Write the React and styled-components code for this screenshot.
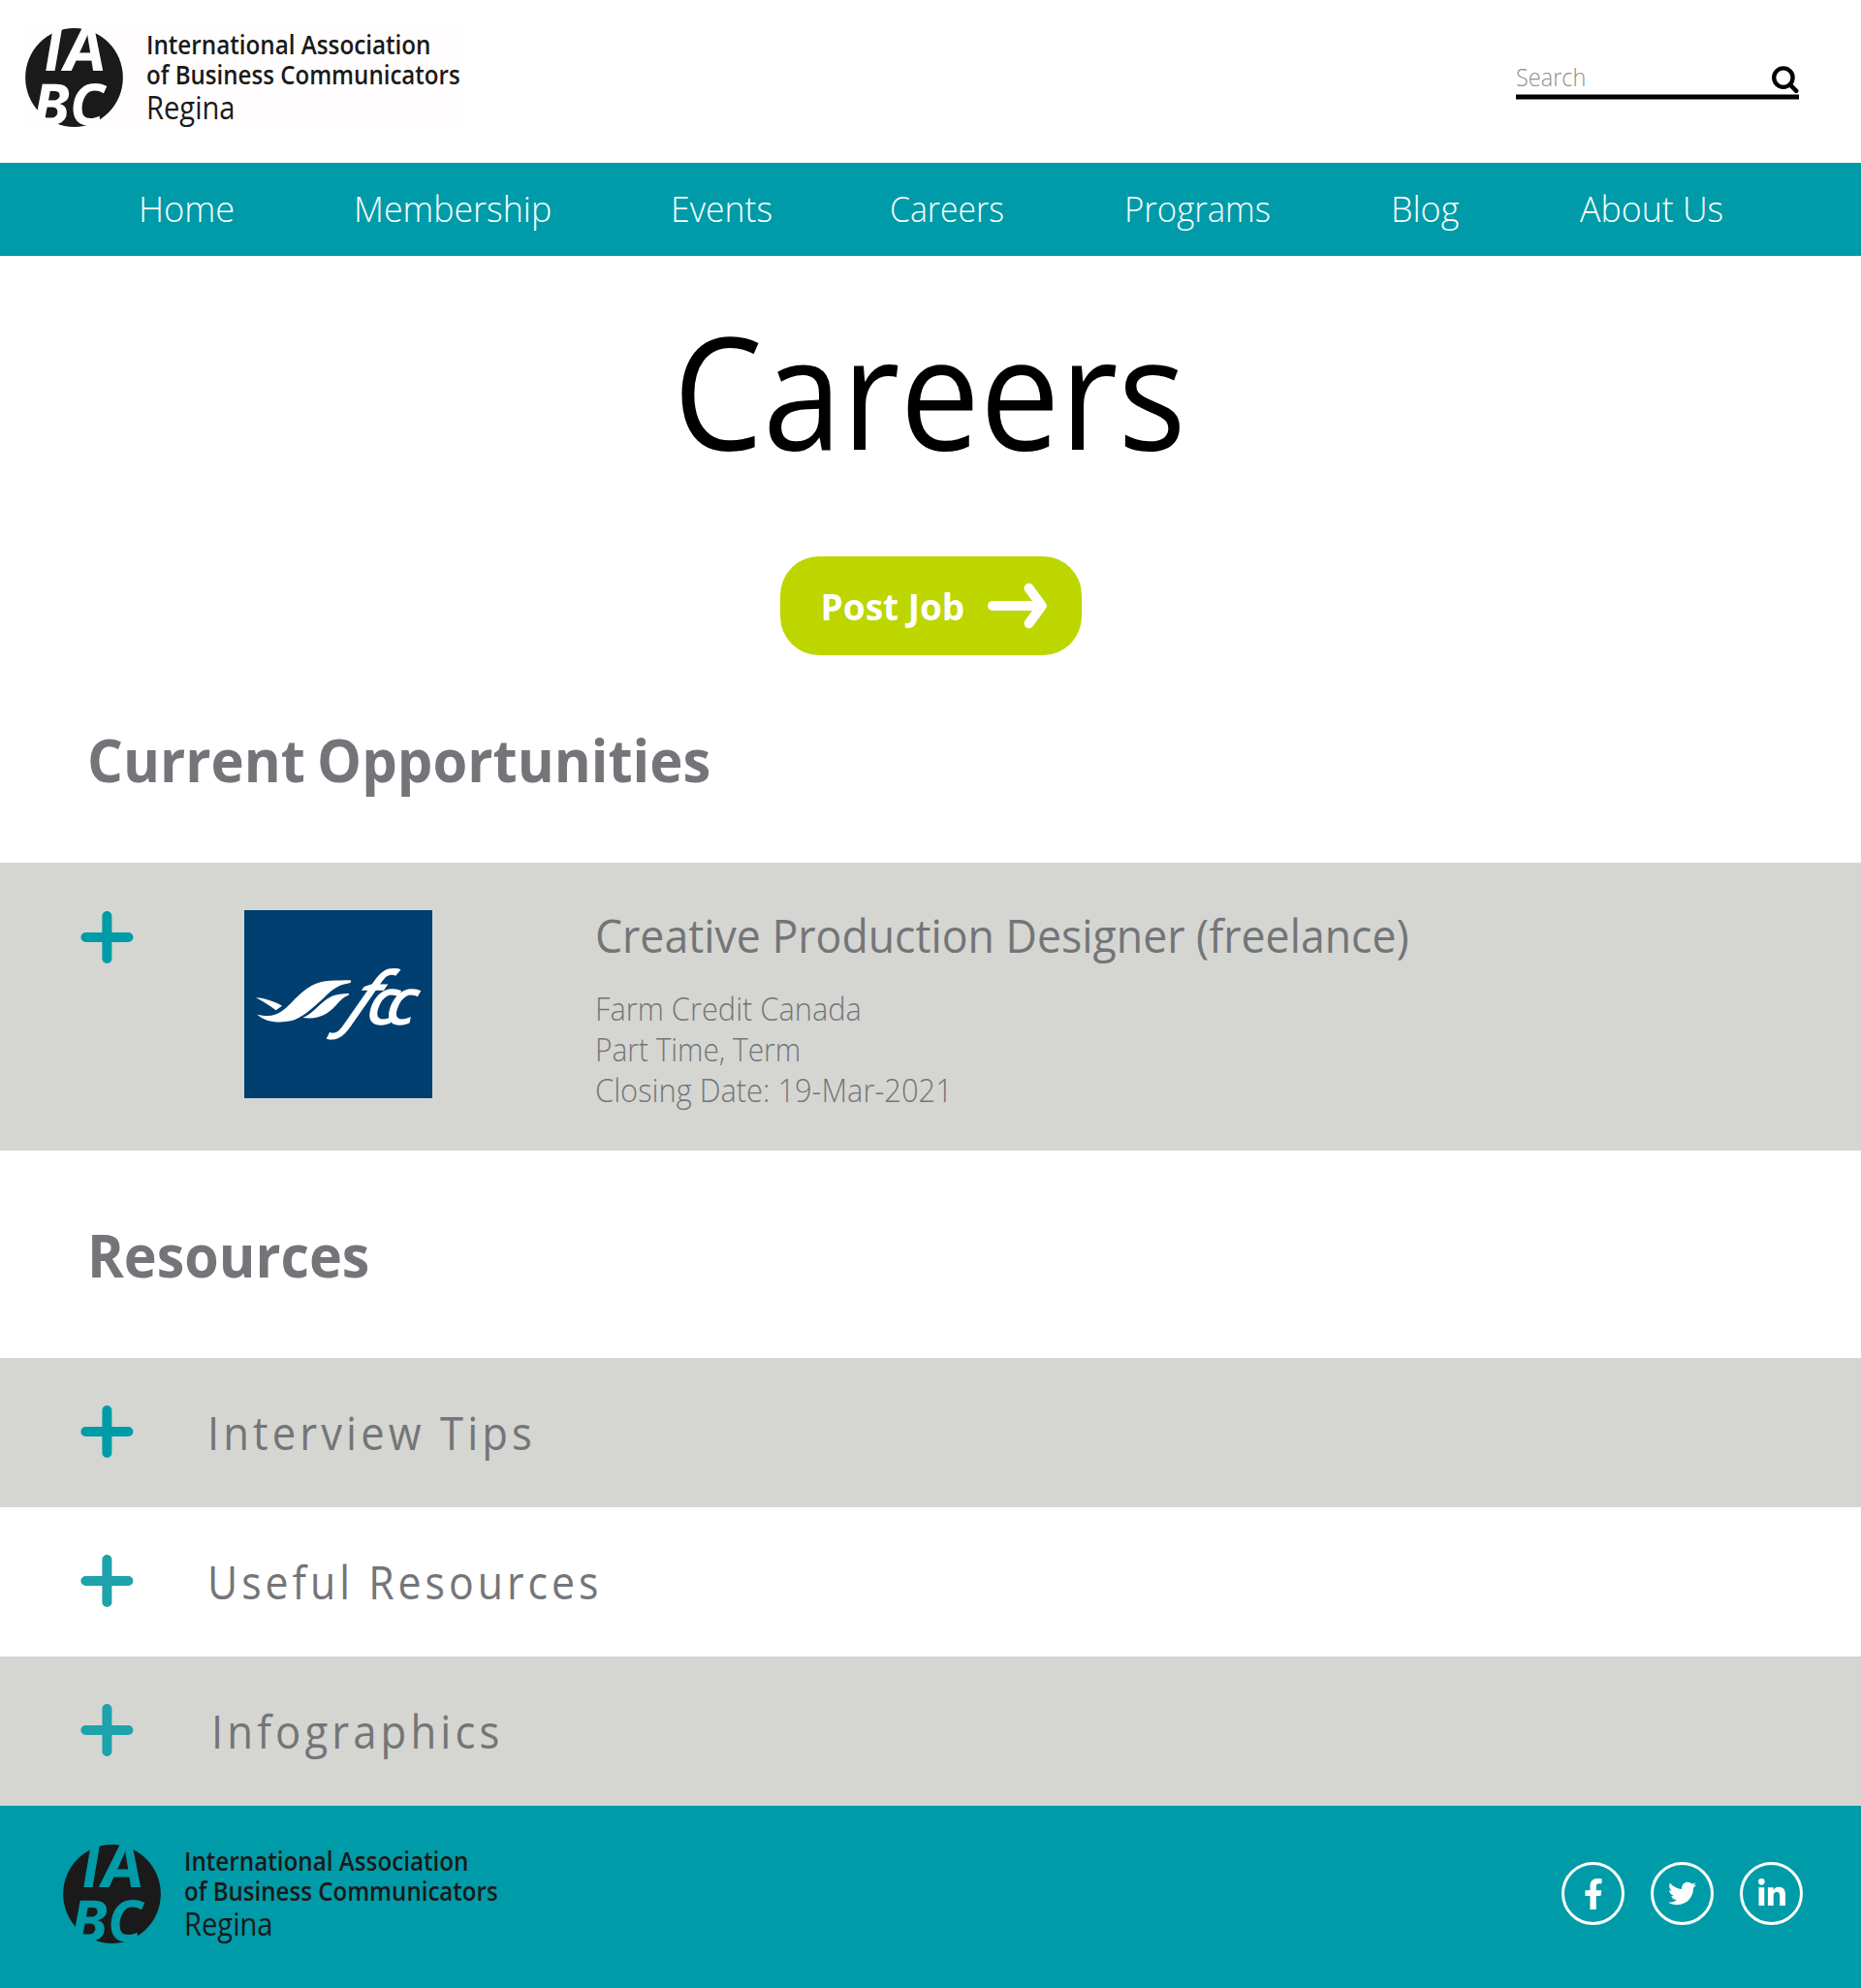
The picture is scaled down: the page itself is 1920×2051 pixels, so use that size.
import React from 'react';
import styled, { createGlobalStyle, css } from 'styled-components';
import { FaFacebookF, FaTwitter, FaLinkedinIn } from 'react-icons/fa';

const teal = '#009ba8';
const tealSoft = '#1ea2ac';
const lime = '#bdd600';
const stone = '#d5d6d1';
const slate = '#747579';
const ink = '#1a1a1a';

const GlobalStyle = createGlobalStyle`
  * { box-sizing: border-box; }
  body {
    margin: 0;
    background: #fff;
    font-family: 'Open Sans', 'Noto Sans', sans-serif;
  }
`;

const narrow = css`
  display: inline-block;
  white-space: nowrap;
  transform: scaleX(${(p) => p.$ratio || 1});
  transform-origin: 0 50%;
`;

const Page = styled.div`
  width: 1920px;
  min-height: 2051px;
  overflow: hidden;
  background: #fff;
`;

const Header = styled.header`
  display: flex;
  justify-content: space-between;
  align-items: flex-start;
  height: 168px;
  padding: 29px 64px 0 26px;
`;

const Brand = styled.a`
  display: flex;
  gap: 24px;
  width: 449px;
  height: 102px;
  color: ${ink};
  background: ${(p) => p.$surface};
`;

const BrandMark = styled.svg`
  flex: none;
  width: 101px;
  height: 102px;
`;

const MarkLetter = styled.text`
  font-family: 'Open Sans', 'Noto Sans', sans-serif;
  font-size: ${(p) => p.$size || 178}px;
  font-weight: ${(p) => p.$weight || 740};
  font-style: italic;
  fill: ${(p) => p.$fill};
`;

const BrandText = styled.div`
  display: flex;
  flex-direction: column;
  align-items: flex-start;
  padding-top: 1px;
`;

const BrandLine = styled.span`
  ${narrow}
  font-size: 27px;
  font-weight: 640;
  line-height: 31px;
`;

const BrandChapter = styled.span`
  ${narrow}
  font-size: 32px;
  font-weight: 400;
  line-height: 37px;
`;

const SearchBox = styled.div`
  width: 292px;
  margin-top: 35px;
`;

const SearchRow = styled.div`
  display: flex;
  justify-content: space-between;
  height: 33px;
`;

const SearchHint = styled.span`
  ${narrow}
  margin-left: 0.4px;
  font-size: 25px;
  font-weight: 330;
  line-height: 31px;
  color: #8f8f8f;
`;

const SearchIcon = styled.svg`
  width: 30px;
  height: 30px;
  margin-top: 3px;
`;

const SearchRule = styled.div`
  height: 6px;
  background: #000;
  border-top: 1px solid #808080;
  border-bottom: 1px solid #808080;
`;

const Nav = styled.nav`
  display: grid;
  grid-template-columns: 222px 327.4px 226.4px 242px 274.3px 195.3px auto;
  height: 96px;
  padding-left: 142.6px;
  background: ${teal};
`;

const NavLink = styled.a`
  ${narrow}
  font-size: 37px;
  font-weight: 340;
  line-height: 93px;
  color: #fff;
`;

const Hero = styled.section`
  display: flex;
  flex-direction: column;
  align-items: center;
  height: 412px;
  padding-top: 57.5px;
`;

const Title = styled.h1`
  ${narrow}
  margin: 0 1px 0 0;
  font-size: 161px;
  font-weight: 410;
  line-height: 160px;
  color: #000;
  transform-origin: 50% 50%;
`;

const PostButton = styled.a`
  display: flex;
  align-items: center;
  gap: 23px;
  width: 311px;
  height: 102px;
  margin: 92.5px 0 0 1px;
  padding-left: 41.5px;
  border-radius: 40px;
  background: ${lime};
`;

const PostLabel = styled.span`
  ${narrow}
  padding-top: 1px;
  font-size: 37px;
  font-weight: 750;
  line-height: 104px;
  color: #fff;
`;

const Arrow = styled.svg`
  width: 64px;
  height: 48px;
`;

const SectionHead = styled.div`
  height: 214px;
  padding: 73px 0 0 90px;
`;

const SectionTitle = styled.h2`
  ${narrow}
  margin: 0;
  font-size: 61px;
  font-weight: 750;
  line-height: 70px;
  word-spacing: -3px;
  color: ${slate};
`;

const JobRow = styled.article`
  display: grid;
  grid-template-columns: 169px 361.5px auto;
  height: 297px;
  padding: 49px 0 0 83px;
  background: ${stone};
`;

const Plus = styled.svg`
  width: 55px;
  height: 55px;
  margin-top: ${(p) => p.$drop || 0}px;
  stroke: ${(p) => p.$tone};
  stroke-width: 10;
  stroke-linecap: round;
`;

const EmployerLogo = styled.svg`
  width: 194px;
  height: 194px;
  background: #003f70;
  fill: #fff;
`;

const ScriptLetter = styled.text`
  font-family: 'Open Sans', 'Noto Sans', sans-serif;
  font-style: italic;
  font-weight: 600;
  font-size: ${(p) => p.$size}px;
`;

const JobText = styled.div`
  display: flex;
  flex-direction: column;
  align-items: flex-start;
  padding-top: 1px;
  color: ${slate};
`;

const JobTitle = styled.h3`
  ${narrow}
  margin: 0 0 30px;
  font-size: 47px;
  font-weight: 410;
  line-height: 50px;
`;

const JobMeta = styled.span`
  ${narrow}
  font-size: 33px;
  font-weight: 340;
  line-height: 42px;
`;

const ResourceRow = styled.div`
  display: flex;
  height: 154px;
  padding-left: 83px;
  background: ${(p) => (p.$shaded ? stone : '#fff')};
`;

const ResourceName = styled.span`
  ${narrow}
  margin-left: ${(p) => p.$indent}px;
  font-size: 47px;
  font-weight: 410;
  line-height: 154px;
  letter-spacing: 4.4px;
  color: ${slate};
`;

const Footer = styled.footer`
  display: flex;
  justify-content: space-between;
  align-items: flex-start;
  height: 188px;
  padding: 40px 60px 0 65px;
  background: ${teal};
`;

const Social = styled.div`
  display: flex;
  gap: 27px;
  padding-top: 18px;
`;

const SocialLink = styled.a`
  display: flex;
  align-items: center;
  justify-content: center;
  width: 65px;
  height: 65px;
  border: 3px solid #fff;
  border-radius: 50%;
  color: #fff;
`;

const navItems = [
  ['Home', 0.98],
  ['Membership', 0.967],
  ['Events', 0.962],
  ['Careers', 0.912],
  ['Programs', 0.938],
  ['Blog', 0.97],
  ['About Us', 0.965],
];

const jobMeta = [
  ['Farm Credit Canada', 0.932],
  ['Part Time, Term', 0.905],
  ['Closing Date: 19-Mar-2021', 0.934],
];

const resources = [
  { name: 'Interview Tips', ratio: 0.928, indent: 75.5, tone: teal, shaded: true },
  { name: 'Useful Resources', ratio: 0.91, indent: 76, tone: tealSoft, shaded: false },
  { name: 'Infographics', ratio: 0.93, indent: 79.5, tone: tealSoft, shaded: true },
];

function Logo({ surface, cutout }) {
  return (
    <Brand $surface={surface}>
      <BrandMark viewBox="78 86 303 306">
        <ellipse cx="229.5" cy="239" rx="151" ry="153" fill={ink} />
        <MarkLetter $fill={cutout} $size={186} $weight={680} transform="translate(137 217) skewX(2.5)">I</MarkLetter>
        <MarkLetter $fill={cutout} $size={186} transform="translate(201 217) skewX(5)" textLength="130" lengthAdjust="spacingAndGlyphs">A</MarkLetter>
        <MarkLetter $fill={cutout} transform="translate(103 387) skewX(2) scale(1.05 1)">B</MarkLetter>
        <MarkLetter $fill={cutout} transform="translate(217 387) skewX(1)">C</MarkLetter>
      </BrandMark>
      <BrandText>
        <BrandLine $ratio={0.897}>International Association</BrandLine>
        <BrandLine $ratio={0.892}>of Business Communicators</BrandLine>
        <BrandChapter $ratio={0.91}>Regina</BrandChapter>
      </BrandText>
    </Brand>
  );
}

function PlusIcon({ tone, drop }) {
  return (
    <Plus $tone={tone} $drop={drop} viewBox="0 0 55 55">
      <path d="M5.4 27H49.4M27.4 5V49" />
    </Plus>
  );
}

function FccLogo() {
  return (
    <EmployerLogo viewBox="576 117 582 582">
      <path d="M612 388C640 389 670 400 693 413L674 427C655 412 635 400 612 388Z" />
      <path d="M616 440C650 448 672 444 692 430C722 408 745 372 785 350C820 332 860 335 905 334C908 338 906 341 902 343C852 352 842 371 815 395C780 426 755 450 720 460C680 468 640 462 616 440Z" />
      <path d="M757 450C793 434 806 406 842 386C862 376 880 376 900 375C901 379 898 381 895 382C870 392 860 420 830 437C810 449 785 454 757 450Z" />
      <ScriptLetter $size={220} transform="translate(879 465) skewX(-26)">f</ScriptLetter>
      <ScriptLetter $size={200} transform="translate(949 472) skewX(-10)">c</ScriptLetter>
      <ScriptLetter $size={200} transform="translate(1007 472) skewX(-11)">c</ScriptLetter>
    </EmployerLogo>
  );
}

export default function App() {
  return (
    <Page>
      <GlobalStyle />
      <Header>
        <Logo surface="#fffdfd" cutout="#fffdfd" />
        <SearchBox>
          <SearchRow>
            <SearchHint $ratio={0.94}>Search</SearchHint>
            <SearchIcon viewBox="0 0 30 30" fill="none" stroke="#000">
              <circle cx="13.9" cy="13.1" r="9.7" strokeWidth="4.3" />
              <path d="M21 20.5L27.2 26.8" strokeWidth="4.6" strokeLinecap="round" />
            </SearchIcon>
          </SearchRow>
          <SearchRule />
        </SearchBox>
      </Header>
      <Nav>
        {navItems.map(([label, ratio]) => (
          <NavLink key={label} $ratio={ratio}>{label}</NavLink>
        ))}
      </Nav>
      <Hero>
        <Title $ratio={0.912}>Careers</Title>
        <PostButton>
          <PostLabel $ratio={1}>Post Job</PostLabel>
          <Arrow viewBox="0 0 64 48" fill="none" stroke="#fff" strokeWidth="10" strokeLinecap="round">
            <path d="M6 24H54" />
            <path d="M43.5 5.8L56.8 24L43.5 42.2" strokeLinejoin="round" />
          </Arrow>
        </PostButton>
      </Hero>
      <SectionHead>
        <SectionTitle $ratio={0.949}>Current Opportunities</SectionTitle>
      </SectionHead>
      <JobRow>
        <PlusIcon tone={teal} drop={1} />
        <FccLogo />
        <JobText>
          <JobTitle $ratio={0.95}>Creative Production Designer (freelance)</JobTitle>
          {jobMeta.map(([line, ratio]) => (
            <JobMeta key={line} $ratio={ratio}>{line}</JobMeta>
          ))}
        </JobText>
      </JobRow>
      <SectionHead>
        <SectionTitle $ratio={0.94}>Resources</SectionTitle>
      </SectionHead>
      {resources.map((r) => (
        <ResourceRow key={r.name} $shaded={r.shaded}>
          <PlusIcon tone={r.tone} drop={49} />
          <ResourceName $ratio={r.ratio} $indent={r.indent}>{r.name}</ResourceName>
        </ResourceRow>
      ))}
      <Footer>
        <Logo surface="transparent" cutout={teal} />
        <Social>
          <SocialLink><FaFacebookF size={32} /></SocialLink>
          <SocialLink><FaTwitter size={29} /></SocialLink>
          <SocialLink><FaLinkedinIn size={32} /></SocialLink>
        </Social>
      </Footer>
    </Page>
  );
}
